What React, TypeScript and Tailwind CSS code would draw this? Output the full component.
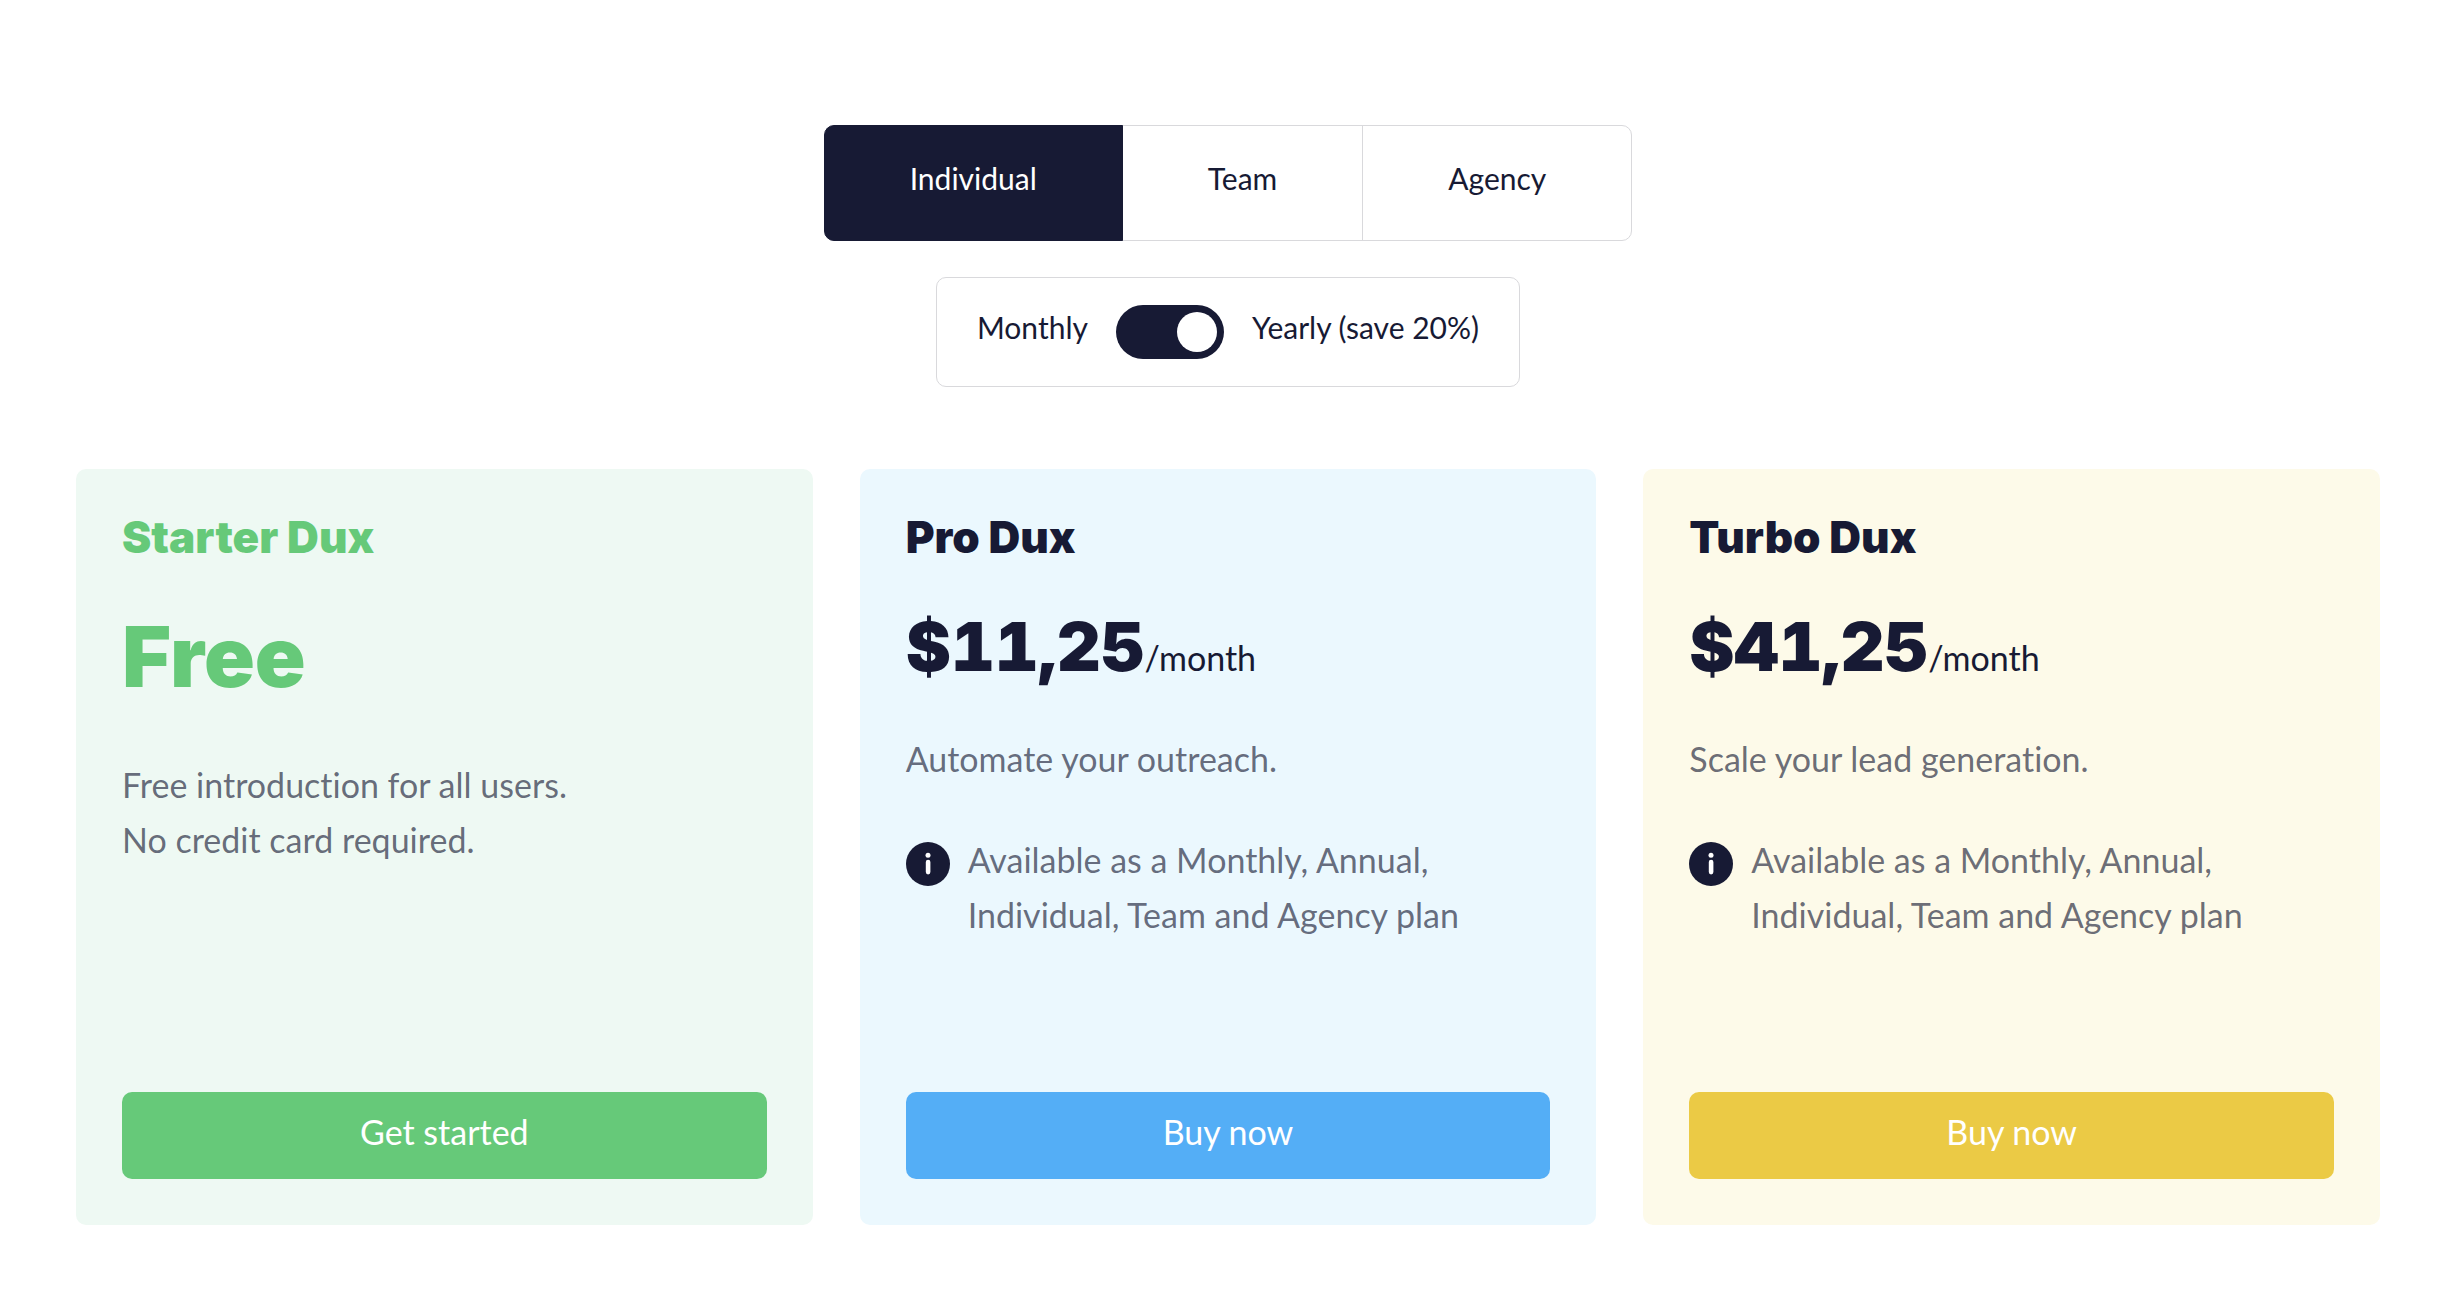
import { useState } from 'react'
import clsx from 'clsx'

// ─── Types ────────────────────────────────────────────────────
interface Plan {
  name: string
  price: string
  period?: string
  description: string[]
  note?: string
  cta: string
  cardClass: string
  headingClass: string
  buttonClass: string
}

const AUDIENCES = ['Individual', 'Team', 'Agency']

const NOTE = 'Available as a Monthly, Annual, Individual, Team and Agency plan'

const PLANS: Plan[] = [
  {
    name: 'Starter Dux',
    price: 'Free',
    description: ['Free introduction for all users.', 'No credit card required.'],
    cta: 'Get started',
    cardClass: 'bg-[#eef9f3]',
    headingClass: 'text-[#66c979]',
    buttonClass: 'bg-[#66c979]',
  },
  {
    name: 'Pro Dux',
    price: '$11,25',
    period: '/month',
    description: ['Automate your outreach.'],
    note: NOTE,
    cta: 'Buy now',
    cardClass: 'bg-[#ebf8fe]',
    headingClass: 'text-[#171a34]',
    buttonClass: 'bg-[#54aef6]',
  },
  {
    name: 'Turbo Dux',
    price: '$41,25',
    period: '/month',
    description: ['Scale your lead generation.'],
    note: NOTE,
    cta: 'Buy now',
    cardClass: 'bg-[#fdfae9]',
    headingClass: 'text-[#171a34]',
    buttonClass: 'bg-[#ebca45]',
  },
]

// ─── Page ─────────────────────────────────────────────────────
export default function App() {
  const [audience, setAudience] = useState('Individual')
  const [yearly, setYearly] = useState(true)

  return (
    <main className="min-h-screen bg-white pt-[125px] pr-[84px] pb-20 pl-[76px] font-['Lato','Open_Sans',sans-serif] text-[#171a34] [font-variant-ligatures:none]">
      <div className="flex flex-col items-center">
        {/* Audience tabs */}
        <div className="flex h-[116px] text-[30px]">
          {AUDIENCES.map((item) => (
            <button
              key={item}
              type="button"
              aria-pressed={audience === item}
              onClick={() => setAudience(item)}
              className={clsx(
                '-ml-px border px-[85px] pb-[10px] first:ml-0 first:rounded-l-[10px] last:rounded-r-[10px]',
                audience === item
                  ? 'z-10 border-[#171a34] bg-[#171a34] text-white'
                  : 'border-[#d9d9dc]',
              )}
            >
              {item}
            </button>
          ))}
        </div>

        {/* Billing period */}
        <div className="mt-9 flex h-[110px] items-center gap-7 rounded-[10px] border border-[#d9d9dc] px-10 text-[30px]">
          <label htmlFor="billing" className="pb-[10px]">
            Monthly
          </label>
          <input
            id="billing"
            type="checkbox"
            role="switch"
            checked={yearly}
            onChange={(e) => setYearly(e.target.checked)}
            className="flex h-[54px] w-[108px] appearance-none items-center rounded-full bg-[#171a34] px-[7px] before:size-10 before:rounded-full before:bg-white checked:justify-end"
          />
          <label htmlFor="billing" className="pb-[10px]">
            Yearly (save 20%)
          </label>
        </div>
      </div>

      {/* Plans */}
      <div className="mt-[82px] grid grid-cols-3 gap-[47px]">
        {PLANS.map((plan) => (
          <PlanCard key={plan.name} plan={plan} />
        ))}
      </div>
    </main>
  )
}

// ─── Sub-components ───────────────────────────────────────────
function PlanCard({ plan }: { plan: Plan }) {
  return (
    <section
      className={clsx(
        'flex min-h-[756px] flex-col rounded-[10px] p-[46px]',
        plan.cardClass,
      )}
    >
      <h2
        className={clsx(
          "font-['Inter','Lato',sans-serif] text-[44px] leading-[44px] font-black",
          plan.headingClass,
        )}
      >
        {plan.name}
      </h2>

      {plan.period ? (
        <p className="mt-[46px] text-[34px] leading-[82px]">
          <span className="font-['Inter','Lato',sans-serif] text-[68px] font-black tabular-nums">
            {plan.price}
          </span>
          {plan.period}
        </p>
      ) : (
        <p
          className={clsx(
            "mt-[42px] font-['Inter','Lato',sans-serif] text-[84px] leading-[112px] font-black",
            plan.headingClass,
          )}
        >
          {plan.price}
        </p>
      )}

      <div
        className={clsx(
          'text-[34px] leading-[55px] text-[#171a34]/65',
          plan.period ? 'mt-8' : 'mt-11',
        )}
      >
        {plan.description.map((line) => (
          <p key={line}>{line}</p>
        ))}
      </div>

      {plan.note && (
        <div className="mt-[46px] flex gap-[18px]">
          <InfoIcon />
          <p className="text-[34px] leading-[55px] text-[#171a34]/65">{plan.note}</p>
        </div>
      )}

      <button
        type="button"
        className={clsx(
          'mt-auto h-[87px] rounded-[10px] pb-2 text-[34px] text-white',
          plan.buttonClass,
        )}
      >
        {plan.cta}
      </button>
    </section>
  )
}

function InfoIcon() {
  return (
    <svg viewBox="0 0 44 44" className="mt-[10px] size-11 shrink-0" aria-hidden="true">
      <circle cx="22" cy="22" r="22" fill="#171a34" />
      <circle cx="22" cy="13.2" r="2.5" fill="#fff" />
      <rect x="19.8" y="17.8" width="4.6" height="14.6" rx="2.3" fill="#fff" />
    </svg>
  )
}
